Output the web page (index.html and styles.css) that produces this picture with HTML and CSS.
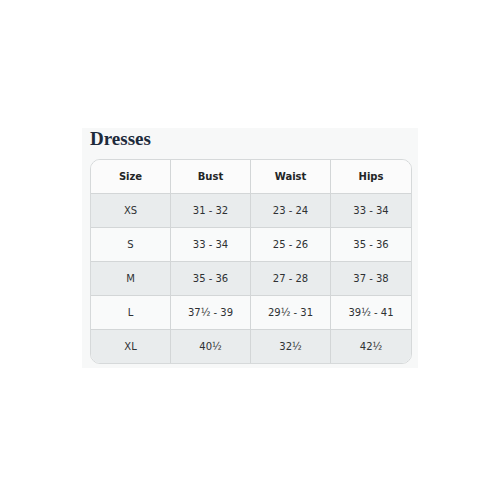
FILE: index.html
```html
<!DOCTYPE html>
<html>
<head>
<meta charset="utf-8">
<link rel="stylesheet" href="styles.css">
</head>
<body>
<div class="panel">
  <h2 class="title">Dresses</h2>
  <div class="table-wrap">
    <table class="size-table">
      <thead>
        <tr><th>Size</th><th>Bust</th><th>Waist</th><th>Hips</th></tr>
      </thead>
      <tbody>
        <tr class="alt"><td>XS</td><td>31 - 32</td><td>23 - 24</td><td>33 - 34</td></tr>
        <tr><td>S</td><td>33 - 34</td><td>25 - 26</td><td>35 - 36</td></tr>
        <tr class="alt"><td>M</td><td>35 - 36</td><td>27 - 28</td><td>37 - 38</td></tr>
        <tr><td>L</td><td>37½ - 39</td><td>29½ - 31</td><td>39½ - 41</td></tr>
        <tr class="alt"><td>XL</td><td>40½</td><td>32½</td><td>42½</td></tr>
      </tbody>
    </table>
  </div>
</div>
</body>
</html>
```
FILE: styles.css
```css
html, body {
  margin: 0;
  padding: 0;
  background: #ffffff;
}
body {
  padding-top: 128px;
  padding-left: 82px;
}
.panel {
  width: 336px;
  box-sizing: border-box;
  background: #f7f8f8;
  padding: 0 6px 4px 8px;
}
.title {
  margin: 0 0 9px 0;
  font-family: "Liberation Serif", serif;
  font-weight: bold;
  font-size: 19px;
  line-height: 22px;
  color: #1d2a3b;
}
.table-wrap {
  width: 322px;
  box-sizing: border-box;
  border: 1px solid #d6d9da;
  border-radius: 10px;
  overflow: hidden;
  background: #fafbfb;
}
.size-table {
  width: 100%;
  border-collapse: separate;
  border-spacing: 0;
  table-layout: fixed;
  font-family: "DejaVu Sans", Verdana, sans-serif;
  font-size: 10px;
  color: #2e3133;
}
.size-table th,
.size-table td {
  height: 33px;
  padding: 0;
  text-align: center;
  vertical-align: middle;
  border-right: 1px solid #d3d6d7;
  border-bottom: 1px solid #d3d6d7;
}
.size-table th:last-child,
.size-table td:last-child {
  border-right: none;
}
.size-table tbody tr:last-child td {
  border-bottom: none;
}
.size-table th {
  font-weight: bold;
  background: #fbfbfb;
  color: #222526;
}
.size-table td {
  background: #f9fafa;
}
.size-table tr.alt td {
  background: #e9eced;
}
```
